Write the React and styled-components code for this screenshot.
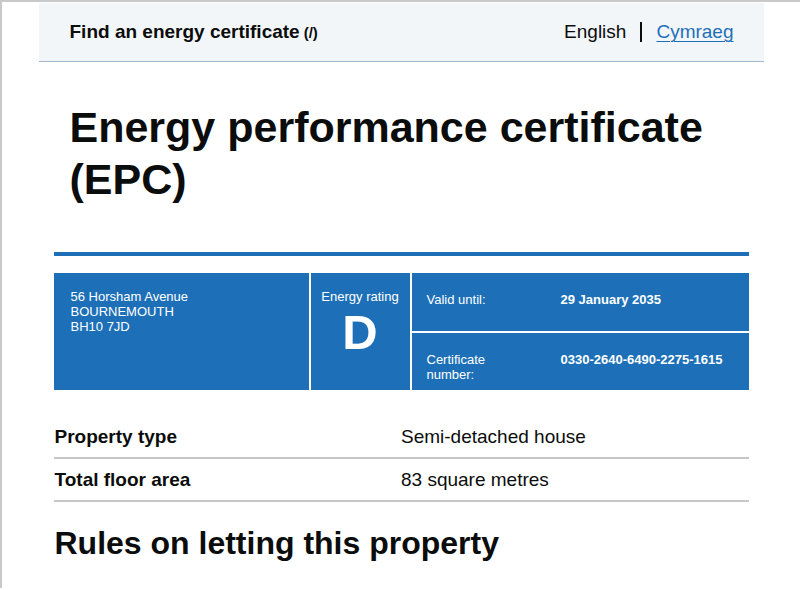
import React from "react";
import styled, { createGlobalStyle } from "styled-components";

const GlobalStyle = createGlobalStyle`
  html, body {
    margin: 0;
    padding: 0;
    background: #ffffff;
  }
  body {
    font-family: "Liberation Sans", Arial, sans-serif;
    color: #0b0c0c;
    border-top: 2px solid #c9c9c9;
    border-left: 2px solid #c9c9c9;
    min-height: 588px;
    box-sizing: border-box;
  }
`;

const Page = styled.div`
  max-width: 725px;
  margin: 0 auto;
  padding-top: 1px;
`;

const Header = styled.header`
  height: 58px;
  display: flex;
  align-items: center;
  justify-content: space-between;
  padding: 0 30px 0 31px;
  background: #f3f6f9;
  border-bottom: 1px solid #9fb6cb;
`;

const ServiceName = styled.a`
  font-size: 19px;
  font-weight: 700;
  color: #0b0c0c;
  text-decoration: none;
`;

const ServiceHint = styled.span`
  font-size: 15px;
  font-weight: 700;
  margin-left: 4px;
`;

const LangNav = styled.nav`
  display: flex;
  align-items: center;
  font-size: 19px;
`;

const LangItem = styled.span`
  color: #0b0c0c;
`;

const LangDivider = styled.span`
  display: inline-block;
  width: 2px;
  height: 20px;
  background: #0b0c0c;
  margin: 0 14px;
`;

const LangLink = styled.a`
  color: #1d70b8;
  text-decoration: underline;
  text-underline-offset: 3px;
  text-decoration-thickness: 1px;
`;

const Main = styled.main`
  padding: 39px 15px 0;
`;

const Title = styled.h1`
  margin: 0;
  padding-left: 16px;
  font-size: 43px;
  line-height: 52px;
  font-weight: 700;
`;

const Rule = styled.hr`
  margin: 47px 0 0;
  border: 0;
  height: 4px;
  background: #1d70b8;
`;

const Summary = styled.section`
  margin-top: 17px;
  display: grid;
  grid-template-columns: 255px 99px 1fr;
  gap: 2px;
  height: 117px;
  background: #ffffff;
  color: #ffffff;
  font-size: 13px;
  line-height: 15px;
`;

const BlueCell = styled.div`
  background: #1d70b8;
  padding: ${(p) => p.$pad || "16px 17px"};
  text-align: ${(p) => (p.$center ? "center" : "left")};
`;

const Rating = styled.div`
  font-size: 49px;
  line-height: 50px;
  font-weight: 700;
  margin-top: 3px;
`;

const Stack = styled.div`
  display: flex;
  flex-direction: column;
  gap: 2px;
`;

const InfoRow = styled.div`
  flex: 1;
  background: #1d70b8;
  padding: 19px 15px 0;
  display: grid;
  grid-template-columns: 134px 1fr;
  align-items: start;
`;

const InfoLabel = styled.span`
  max-width: 80px;
`;

const InfoValue = styled.span`
  font-weight: 700;
`;

const List = styled.dl`
  margin: 26px 0 0;
`;

const ListRow = styled.div`
  display: grid;
  grid-template-columns: 1fr 1fr;
  padding: 8px 0;
  border-bottom: 2px solid #c4c6c7;
  font-size: 19px;
  line-height: 25px;
`;

const Key = styled.dt`
  font-weight: 700;
  padding-left: 1px;
`;

const Value = styled.dd`
  margin: 0;
`;

const SectionHeading = styled.h2`
  margin: 21px 0 0;
  padding-left: 1px;
  font-size: 32px;
  line-height: 40px;
  font-weight: 700;
`;

const rows = [
  ["Property type", "Semi-detached house"],
  ["Total floor area", "83 square metres"],
];

export default function App() {
  return (
    <>
      <GlobalStyle />
      <Page>
        <Header>
          <ServiceName href="#">
            Find an energy certificate<ServiceHint>(/)</ServiceHint>
          </ServiceName>
          <LangNav>
            <LangItem>English</LangItem>
            <LangDivider />
            <LangLink href="#">Cymraeg</LangLink>
          </LangNav>
        </Header>
        <Main>
          <Title>
            Energy performance certificate
            <br />
            (EPC)
          </Title>
          <Rule />
          <Summary>
            <BlueCell>
              56 Horsham Avenue
              <br />
              BOURNEMOUTH
              <br />
              BH10 7JD
            </BlueCell>
            <BlueCell $center $pad="16px 4px">
              Energy rating
              <Rating>D</Rating>
            </BlueCell>
            <Stack>
              <InfoRow>
                <InfoLabel>Valid until:</InfoLabel>
                <InfoValue>29 January 2035</InfoValue>
              </InfoRow>
              <InfoRow>
                <InfoLabel>Certificate number:</InfoLabel>
                <InfoValue>0330-2640-6490-2275-1615</InfoValue>
              </InfoRow>
            </Stack>
          </Summary>
          <List>
            {rows.map(([k, v]) => (
              <ListRow key={k}>
                <Key>{k}</Key>
                <Value>{v}</Value>
              </ListRow>
            ))}
          </List>
          <SectionHeading>Rules on letting this property</SectionHeading>
        </Main>
      </Page>
    </>
  );
}
